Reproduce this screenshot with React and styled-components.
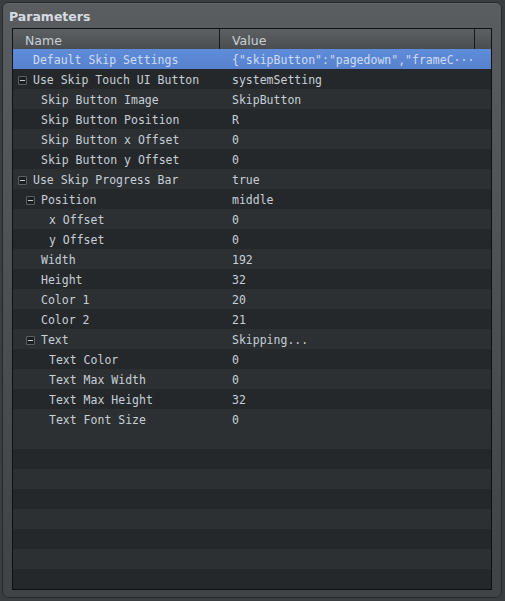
import React from "react";
import styled, { createGlobalStyle } from "styled-components";

const GlobalStyle = createGlobalStyle`
  html, body {
    margin: 0;
    padding: 0;
    background: #3b3e40;
    width: 505px;
    height: 601px;
    overflow: hidden;
  }
  * {
    box-sizing: border-box;
  }
`;

const Panel = styled.div`
  display: flex;
  flex-direction: column;
  margin: 2px 3px 3px 2px;
  width: 500px;
  height: 596px;
  border: 1px solid #26292b;
  border-radius: 6px;
  background: linear-gradient(#5a5d60, #404346);
  box-shadow: inset 0 1px 0 rgba(255, 255, 255, 0.06);
`;

const Title = styled.div`
  height: 25px;
  padding-top: 2px;
  line-height: 23px;
  padding-left: 6px;
  font-family: "DejaVu Sans", sans-serif;
  font-weight: bold;
  font-size: 12.5px;
  color: #d6dbe0;
`;

const Table = styled.div`
  display: flex;
  flex-direction: column;
  margin: 0 9px 7px 9px;
  flex: 1;
  border: 1px solid #0f1112;
  background: #25282b;
  overflow: hidden;
`;

const Header = styled.div`
  display: grid;
  grid-template-columns: 207px 1fr 16px;
  height: 20px;
  background: linear-gradient(#5e6164, #4a4d50);
`;

const HeaderCell = styled.div`
  padding: 3px 0 0 12px;
  line-height: 17px;
  font-family: "DejaVu Sans", sans-serif;
  font-size: 12.5px;
  color: #c9cfd5;
  border-right: ${(p) => (p.$last ? "none" : "1px solid #16181a")};
`;

const Row = styled.div`
  display: grid;
  grid-template-columns: 207px 1fr;
  height: 20px;
  background: ${(p) =>
    p.$selected
      ? "linear-gradient(#5f8cd9, #5681cf)"
      : p.$light
      ? "#2c3033"
      : "#25282b"};
  color: ${(p) => (p.$selected ? "#cfdcf2" : "#c7cfd7")};
  font-family: "DejaVu Sans Mono", monospace;
  font-size: 11.5px;
  line-height: 18px;
`;

const NameCell = styled.div`
  display: flex;
  align-items: center;
  padding-top: 2px;
  padding-left: ${(p) => 5 + p.$level * 8}px;
  white-space: nowrap;
  overflow: hidden;
`;

const ValueCell = styled.div`
  padding: 2px 20px 0 12px;
  white-space: nowrap;
  overflow: hidden;
`;

const Toggle = styled.span`
  position: relative;
  flex: none;
  width: 9px;
  height: 9px;
  margin-right: 6px;
  border: 1px solid ${(p) => (p.$hidden ? "transparent" : "#5c6064")};
  border-radius: 1px;
  background: ${(p) => (p.$hidden ? "transparent" : "#1c1f21")};

  &::after {
    content: "";
    display: ${(p) => (p.$hidden ? "none" : "block")};
    position: absolute;
    left: 1px;
    top: 3px;
    width: 5px;
    height: 1px;
    background: #c3cbd3;
  }
`;

const rows = [
  { name: "Default Skip Settings", value: '{"skipButton":"pagedown","frameC\u00b7\u00b7\u00b7', level: 0, selected: true },
  { name: "Use Skip Touch UI Button", value: "systemSetting", level: 0, toggle: true },
  { name: "Skip Button Image", value: "SkipButton", level: 1 },
  { name: "Skip Button Position", value: "R", level: 1 },
  { name: "Skip Button x Offset", value: "0", level: 1 },
  { name: "Skip Button y Offset", value: "0", level: 1 },
  { name: "Use Skip Progress Bar", value: "true", level: 0, toggle: true },
  { name: "Position", value: "middle", level: 1, toggle: true },
  { name: "x Offset", value: "0", level: 2 },
  { name: "y Offset", value: "0", level: 2 },
  { name: "Width", value: "192", level: 1 },
  { name: "Height", value: "32", level: 1 },
  { name: "Color 1", value: "20", level: 1 },
  { name: "Color 2", value: "21", level: 1 },
  { name: "Text", value: "Skipping...", level: 1, toggle: true },
  { name: "Text Color", value: "0", level: 2 },
  { name: "Text Max Width", value: "0", level: 2 },
  { name: "Text Max Height", value: "32", level: 2 },
  { name: "Text Font Size", value: "0", level: 2 },
];

const EMPTY_ROWS = 8;

export default function App() {
  return (
    <>
      <GlobalStyle />
      <Panel>
        <Title>Parameters</Title>
        <Table>
          <Header>
            <HeaderCell>Name</HeaderCell>
            <HeaderCell>Value</HeaderCell>
            <HeaderCell $last />
          </Header>
          {rows.map((r, i) => (
            <Row key={r.name + i} $selected={r.selected} $light={i % 2 === 0}>
              <NameCell $level={r.level}>
                <Toggle $hidden={!r.toggle} />
                {r.name}
              </NameCell>
              <ValueCell>{r.value}</ValueCell>
            </Row>
          ))}
          {Array.from({ length: EMPTY_ROWS }).map((_, j) => (
            <Row key={"empty" + j} $light={j % 2 === 0}>
              <NameCell $level={0} />
              <ValueCell />
            </Row>
          ))}
        </Table>
      </Panel>
    </>
  );
}
